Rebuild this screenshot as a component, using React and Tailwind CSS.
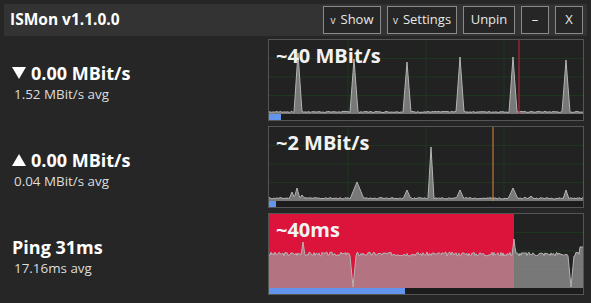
import React from "react";

const W = 314;
const H = 74;

function rng(seed) {
  let s = seed;
  return () => {
    s = (s * 9301 + 49297) % 233280;
    return s / 233280;
  };
}

function buildSeries(base, noise, features, seed, end) {
  const r = rng(seed);
  const pts = [];
  for (let x = 0; x <= W; x++) {
    let y = base - r() * noise;
    for (const f of features) {
      const d = Math.abs(x - f.x);
      if (d <= f.w) {
        const fy = f.y + (base - f.y) * (d / f.w);
        if (f.down ? fy > y : fy < y) y = fy;
      }
    }
    if (end && x >= W - 3) y = end;
    pts.push([x, y]);
  }
  return pts;
}

function Grid() {
  const lines = [];
  [79, 157, 235].forEach((x) =>
    lines.push(<line key={"v" + x} x1={x} y1={0} x2={x} y2={H} stroke="#1d361d" strokeWidth="1" />)
  );
  [18.5, 37, 55.5].forEach((y) =>
    lines.push(<line key={"h" + y} x1={0} y1={y} x2={W} y2={y} stroke="#1d361d" strokeWidth="1" />)
  );
  return <g>{lines}</g>;
}

function Chart({ label, pts, blue, marker, redUntil }) {
  const line = pts.map((p) => p.join(",")).join(" ");
  const area = `0,${H} ${line} ${W},${H}`;
  return (
    <div className="relative flex h-[82px] w-[316px] flex-col border border-[#555555] bg-[#222222]">
      <svg width={W} height={H} viewBox={`0 0 ${W} ${H}`} className="block">
        <Grid />
        {redUntil ? <rect x="0" y="0" width={redUntil} height={H} fill="#dc143c" /> : null}
        <polygon points={area} fill="#a0a0a0" fillOpacity="0.68" />
        <polyline points={line} fill="none" stroke="#b4b4b4" strokeWidth="1" />
        {marker ? (
          <line x1={marker.x} y1="0" x2={marker.x} y2={H} stroke={marker.c} strokeWidth="1" />
        ) : null}
      </svg>
      <div className="flex h-[6px] bg-[#1c1c1c]">
        <div className="h-full bg-[#6495ed]" style={{ width: blue }} />
      </div>
      <div className="absolute left-[7px] top-[3px] text-[20px] font-bold leading-[26px] text-[#f2f2f2]">
        {label}
      </div>
    </div>
  );
}

function Tri({ down }) {
  return (
    <svg width="14" height="12" viewBox="0 0 14 12" className="mr-[5px] block">
      <polygon points={down ? "0,0 14,0 7,12" : "0,12 14,12 7,0"} fill="#ffffff" />
    </svg>
  );
}

function Stat({ icon, title, sub }) {
  return (
    <div className="flex flex-col pt-[5px]">
      <div className="flex items-center pl-[12px] text-[18px] font-bold leading-[23px] text-white">
        {icon ? <Tri down={icon === "down"} /> : null}
        {title}
      </div>
      <div className="pl-[14px] text-[13.4px] leading-[19px] text-[#dddddd]">{sub}</div>
    </div>
  );
}

function Btn({ children, w }) {
  return (
    <div
      className={`flex h-[28px] items-center justify-center border border-[#8a8a8a] bg-[#262626] text-[13px] text-[#e8e8e8] ${w}`}
    >
      {children}
    </div>
  );
}

export default function App() {
  const s1 = buildSeries(
    72.5,
    1.2,
    [
      { x: 29, y: 13, w: 4 },
      { x: 85, y: 19, w: 4 },
      { x: 138, y: 22, w: 4 },
      { x: 191, y: 17, w: 4 },
      { x: 244, y: 17, w: 4 },
      { x: 297, y: 20, w: 4 },
    ],
    7
  );
  const s2 = buildSeries(
    72,
    1.5,
    [
      { x: 23, y: 65, w: 3 },
      { x: 28, y: 61, w: 3 },
      { x: 33, y: 68, w: 3 },
      { x: 88, y: 55, w: 7 },
      { x: 138, y: 63, w: 4 },
      { x: 162, y: 20, w: 3 },
      { x: 191, y: 63, w: 4 },
      { x: 244, y: 61, w: 5 },
      { x: 262, y: 69, w: 3 },
      { x: 297, y: 63, w: 3 },
    ],
    11
  );
  const s3 = buildSeries(
    42,
    4,
    [
      { x: 34, y: 28, w: 2 },
      { x: 84, y: 73, w: 3, down: true },
      { x: 245, y: 25, w: 2 },
      { x: 302, y: 73, w: 3, down: true },
    ],
    3,
    33
  );
  return (
    <div
      className="h-[303px] w-[591px] overflow-hidden bg-[#262626] text-white"
      style={{ fontFamily: '"Open Sans", sans-serif' }}
    >
      <div className="mx-[4px] mt-[4px] flex h-[32px] items-center bg-[#333333] pl-[6px] pr-[4px]">
        <div className="text-[15.5px] font-bold text-white">ISMon v1.1.0.0</div>
        <div className="ml-auto flex gap-[6px]">
          <Btn w="w-[58px]">
            <span className="mr-[5px] text-[10px]">v</span>Show
          </Btn>
          <Btn w="w-[70px]">
            <span className="mr-[5px] text-[10px]">v</span>Settings
          </Btn>
          <Btn w="w-[52px]">Unpin</Btn>
          <Btn w="w-[28px]">–</Btn>
          <Btn w="w-[28px]">X</Btn>
        </div>
      </div>
      <div className="mt-[3px] flex flex-col gap-[5px] pl-[268px]">
        <div className="relative">
          <div className="absolute left-[-268px] top-0 flex h-[82px] w-[268px] items-center">
            <Stat icon="down" title="0.00 MBit/s" sub="1.52 MBit/s avg" />
          </div>
          <Chart label="~40 MBit/s" pts={s1} blue={12} marker={{ x: 250, c: "#d0203a" }} />
        </div>
        <div className="relative">
          <div className="absolute left-[-268px] top-0 flex h-[82px] w-[268px] items-center">
            <Stat icon="up" title="0.00 MBit/s" sub="0.04 MBit/s avg" />
          </div>
          <Chart label="~2 MBit/s" pts={s2} blue={7} marker={{ x: 224, c: "#d88a3a" }} />
        </div>
        <div className="relative">
          <div className="absolute left-[-268px] top-0 flex h-[82px] w-[268px] items-center">
            <Stat title="Ping 31ms" sub="17.16ms avg" />
          </div>
          <Chart label="~40ms" pts={s3} blue={136} redUntil={245} />
        </div>
      </div>
    </div>
  );
}
